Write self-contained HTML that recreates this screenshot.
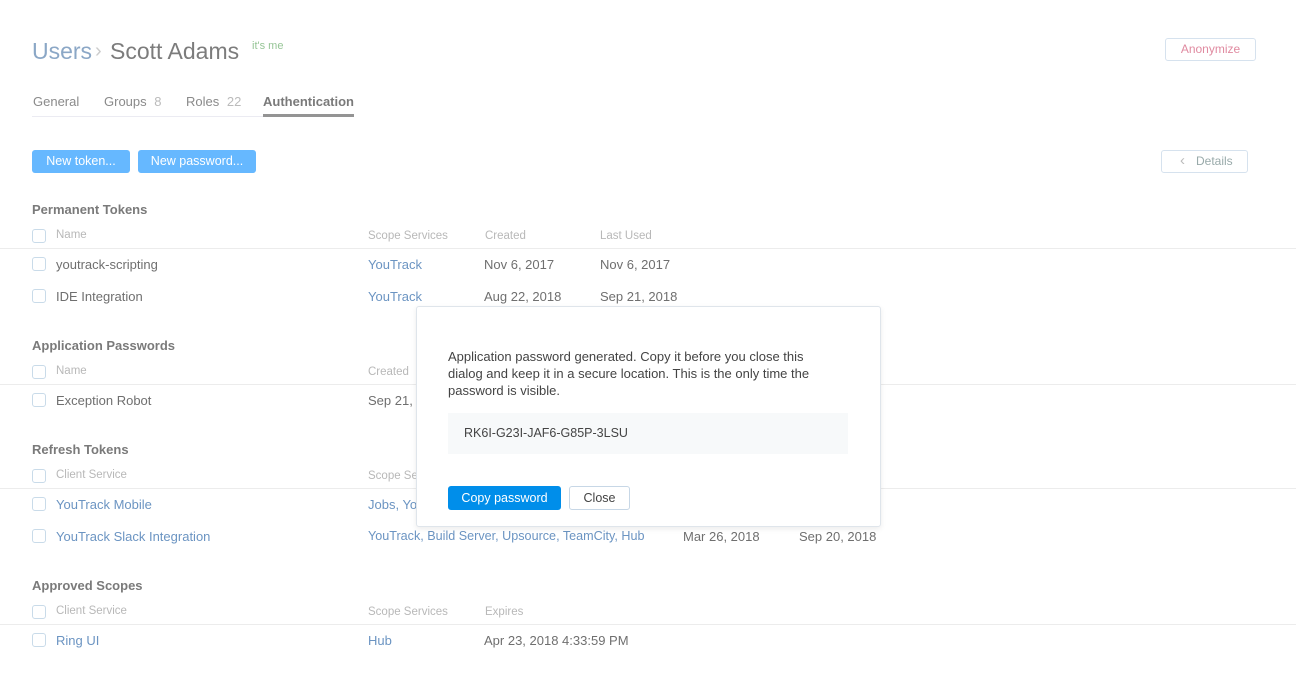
<!DOCTYPE html>
<html><head><meta charset="utf-8"><style>
*{margin:0;padding:0;box-sizing:border-box}
body{width:1296px;height:676px;background:#fff;font-family:"Liberation Sans",sans-serif;font-size:13px;color:#6f6f6f;position:relative;overflow:hidden}
.a{position:absolute;white-space:nowrap}
.h{color:#b8b8b8;font-size:11.5px}
.l{color:#6b94c2}
.t{font-weight:bold;color:#7a7a7a;font-size:13px}
.cb{position:absolute;width:14px;height:14px;border:1px solid #c9dbe9;border-radius:3px;left:32px}
.ln{position:absolute;left:0;width:1296px;height:1px;background:#ececec}
.btn{position:absolute;background:#66b8ff;color:#fff;border-radius:3px;height:23px;line-height:23px;text-align:center;font-size:12.5px}
</style></head><body>
<div class="a" style="left:32px;top:38px;font-size:23px;color:#8ba7c6">Users</div>
<div class="a" style="left:95px;top:40px;font-size:20px;color:#ccc">›</div>
<div class="a" style="left:110px;top:38px;font-size:23px;color:#7c7c7c">Scott Adams</div>
<div class="a" style="left:252px;top:40px;font-size:11px;color:#96c596">it's me</div>
<div class="a" style="left:1165px;top:38px;width:91px;height:23px;border:1px solid #d6e2ee;border-radius:3px;color:#e08aa0;text-align:center;line-height:21px;font-size:12px">Anonymize</div>

<div class="a" style="left:33px;top:94px;color:#8a8a8a">General</div>
<div class="a" style="left:104px;top:94px;color:#8a8a8a">Groups <span style="color:#bbb;margin-left:4px">8</span></div>
<div class="a" style="left:186px;top:94px;color:#8a8a8a">Roles <span style="color:#bbb;margin-left:4px">22</span></div>
<div class="a" style="left:263px;top:94px;color:#7a7a7a;font-weight:bold">Authentication</div>
<div class="a" style="left:32px;top:116px;width:322px;height:1px;background:#ebebf2"></div>
<div class="a" style="left:263px;top:114px;width:91px;height:3px;background:#949494"></div>

<div class="btn" style="left:32px;top:150px;width:98px">New token...</div>
<div class="btn" style="left:138px;top:150px;width:118px">New password...</div>
<div class="a" style="left:1161px;top:150px;width:87px;height:23px;border:1px solid #d6e2ee;border-radius:3px;color:#9aa;line-height:21px;font-size:12px;padding-left:34px"><span style="color:#bbb;position:absolute;left:18px;top:-1px;font-size:15px">‹</span>Details</div>

<div class="a t" style="left:32px;top:202px">Permanent Tokens</div>
<div class="cb" style="top:229px"></div>
<div class="a h" style="left:56px;top:229px">Name</div>
<div class="a h" style="left:368px;top:230px">Scope Services</div>
<div class="a h" style="left:485px;top:230px">Created</div>
<div class="a h" style="left:600px;top:230px">Last Used</div>
<div class="ln" style="top:248px"></div>
<div class="cb" style="top:257px"></div>
<div class="a" style="left:56px;top:257px">youtrack-scripting</div>
<div class="a l" style="left:368px;top:257px">YouTrack</div>
<div class="a" style="left:484px;top:257px">Nov 6, 2017</div>
<div class="a" style="left:600px;top:257px">Nov 6, 2017</div>
<div class="cb" style="top:289px"></div>
<div class="a" style="left:56px;top:289px">IDE Integration</div>
<div class="a l" style="left:368px;top:289px">YouTrack</div>
<div class="a" style="left:484px;top:289px">Aug 22, 2018</div>
<div class="a" style="left:600px;top:289px">Sep 21, 2018</div>

<div class="a t" style="left:32px;top:338px">Application Passwords</div>
<div class="cb" style="top:365px"></div>
<div class="a h" style="left:56px;top:365px">Name</div>
<div class="a h" style="left:368px;top:366px">Created</div>
<div class="ln" style="top:384px"></div>
<div class="cb" style="top:393px"></div>
<div class="a" style="left:56px;top:393px">Exception Robot</div>
<div class="a" style="left:368px;top:393px">Sep 21, 2018</div>

<div class="a t" style="left:32px;top:442px">Refresh Tokens</div>
<div class="cb" style="top:469px"></div>
<div class="a h" style="left:56px;top:469px">Client Service</div>
<div class="a h" style="left:368px;top:470px">Scope Services</div>
<div class="ln" style="top:488px"></div>
<div class="cb" style="top:497px"></div>
<div class="a l" style="left:56px;top:497px">YouTrack Mobile</div>
<div class="a l" style="left:368px;top:497px">Jobs, YouTrack</div>
<div class="cb" style="top:529px"></div>
<div class="a l" style="left:56px;top:529px">YouTrack Slack Integration</div>
<div class="a l" style="left:368px;top:529px;font-size:12.6px">YouTrack, Build Server, Upsource, TeamCity, Hub</div>
<div class="a" style="left:683px;top:529px">Mar 26, 2018</div>
<div class="a" style="left:799px;top:529px">Sep 20, 2018</div>

<div class="a t" style="left:32px;top:578px">Approved Scopes</div>
<div class="cb" style="top:605px"></div>
<div class="a h" style="left:56px;top:605px">Client Service</div>
<div class="a h" style="left:368px;top:606px">Scope Services</div>
<div class="a h" style="left:485px;top:606px">Expires</div>
<div class="ln" style="top:624px"></div>
<div class="cb" style="top:633px"></div>
<div class="a l" style="left:56px;top:633px">Ring UI</div>
<div class="a l" style="left:368px;top:633px">Hub</div>
<div class="a" style="left:484px;top:633px">Apr 23, 2018 4:33:59 PM</div>

<div class="a" style="left:416px;top:306px;width:465px;height:221px;background:#fff;border:1px solid #dfe5eb;border-radius:3px;box-shadow:0 2px 6px rgba(0,0,0,.08)">
 <div class="a" style="left:31px;top:41px;width:380px;white-space:normal;color:#444;font-size:13px;line-height:17px">Application password generated. Copy it before you close this dialog and keep it in a secure location. This is the only time the password is visible.</div>
 <div class="a" style="left:31px;top:106px;width:400px;height:41px;background:#f7f9fa;color:#444;line-height:41px;padding-left:16px;font-size:12.5px">RK6I-G23I-JAF6-G85P-3LSU</div>
 <div class="a" style="left:31px;top:179px;width:113px;height:24px;background:#008eea;border-radius:3px;color:#fff;text-align:center;line-height:24px;font-size:12.5px">Copy password</div>
 <div class="a" style="left:152px;top:179px;width:61px;height:24px;border:1px solid #c7d7e6;border-radius:3px;color:#444;text-align:center;line-height:22px;font-size:12.5px">Close</div>
</div>
</body></html>
